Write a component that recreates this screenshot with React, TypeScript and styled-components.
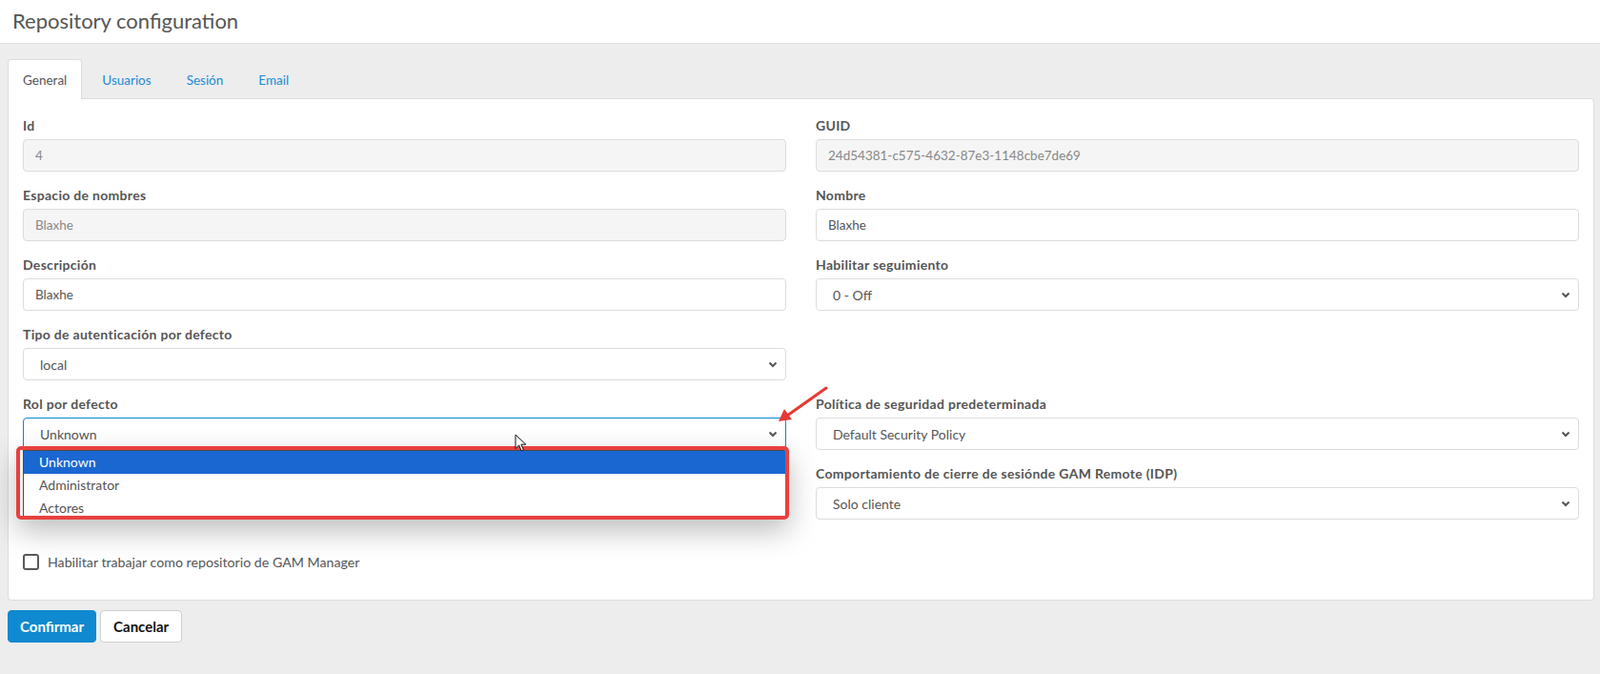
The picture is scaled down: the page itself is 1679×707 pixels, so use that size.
import { createGlobalStyle } from "styled-components";
import styled from "styled-components";

const GlobalStyle = createGlobalStyle`
  html, body {
    margin: 0;
    padding: 0;
    background: #ededed;
    font-family: Lato, "Open Sans", "Liberation Sans", sans-serif;
    color: #555;
  }
  * {
    box-sizing: border-box;
  }
`;

type FieldDef = {
  label: string;
  value: string;
  kind: "input" | "select" | "empty";
  disabled?: boolean;
};

const fields: FieldDef[] = [
  { label: "Id", value: "4", kind: "input", disabled: true },
  { label: "GUID", value: "24d54381-c575-4632-87e3-1148cbe7de69", kind: "input", disabled: true },
  { label: "Espacio de nombres", value: "Blaxhe", kind: "input", disabled: true },
  { label: "Nombre", value: "Blaxhe", kind: "input" },
  { label: "Descripción", value: "Blaxhe", kind: "input" },
  { label: "Habilitar seguimiento", value: "0 - Off", kind: "select" },
  { label: "Tipo de autenticación por defecto", value: "local", kind: "select" },
  { label: "", value: "", kind: "empty" }
];

const fieldsAfter: FieldDef[] = [
  { label: "Política de seguridad predeterminada", value: "Default Security Policy", kind: "select" },
  { label: "", value: "", kind: "empty" },
  { label: "Comportamiento de cierre de sesiónde GAM Remote (IDP)", value: "Solo cliente", kind: "select" }
];

const roleOptions = ["Unknown", "Administrator", "Actores"];

const HeaderBar = styled.header`
  height: 46px;
  background: #fff;
  border-bottom: 1px solid #dcdcdc;
  display: flex;
  align-items: center;
  padding-left: 13px;
`;

const Title = styled.h1`
  margin: 0;
  font-size: 22px;
  font-weight: 400;
  color: #555;
  line-height: 1;
  padding-bottom: 2px;
`;

const Main = styled.main`
  padding: 16px 6px 0 8px;
`;

const TabList = styled.nav`
  display: flex;
  gap: 5px;
  position: relative;
  z-index: 1;
  margin-bottom: -1px;
`;

const Tab = styled.a<{ $active?: boolean }>`
  display: flex;
  align-items: center;
  height: 42px;
  padding: 0 15px;
  font-size: 13.5px;
  text-decoration: none;
  color: ${(p) => (p.$active ? "#555" : "#1b8bd3")};
  background: ${(p) => (p.$active ? "#fff" : "transparent")};
  border: 1px solid ${(p) => (p.$active ? "#dcdcdc" : "transparent")};
  border-bottom: none;
  border-radius: 4px 4px 0 0;
`;

const Panel = styled.section`
  background: #fff;
  border: 1px solid #dcdcdc;
  border-radius: 0 4px 4px 4px;
  padding: 18px 15px 30px;
`;

const FormGrid = styled.div`
  display: grid;
  grid-template-columns: 1fr 1fr;
  column-gap: 31px;
`;

const Field = styled.div`
  margin-bottom: 15px;
  min-height: 58px;
`;

const Label = styled.label`
  display: block;
  font-size: 14px;
  font-weight: 700;
  letter-spacing: 0.3px;
  line-height: 19px;
  margin-bottom: 5px;
  color: #555;
`;

const TextInput = styled.input`
  display: block;
  width: 100%;
  height: 34px;
  padding: 0 12px;
  font-family: inherit;
  font-size: 13.5px;
  color: ${(p) => (p.disabled ? "#888" : "#555")};
  background: ${(p) => (p.disabled ? "#f5f5f5" : "#fff")};
  border: 1px solid #dcdcdc;
  border-radius: 4px;
  outline: none;
`;

const SelectWrap = styled.div`
  position: relative;
`;

const SelectBox = styled.div<{ $focused?: boolean }>`
  display: flex;
  align-items: center;
  justify-content: space-between;
  height: 34px;
  padding: 0 8px 0 17px;
  font-size: 14px;
  color: #555;
  background: #fff;
  border: 1px solid ${(p) => (p.$focused ? "#0c86d1" : "#dcdcdc")};
  border-radius: 4px;
`;

const Chevron = styled.svg`
  width: 10px;
  height: 7px;
  flex: none;
`;

const DropFrame = styled.div`
  position: absolute;
  top: 30px;
  left: -7px;
  right: -3px;
  height: 77px;
  border: 4px solid #e8403f;
  border-radius: 5px;
  padding-left: 3px;
  background: #f2f2f2;
  box-shadow: 0 12px 30px rgba(0, 0, 0, 0.26);
  z-index: 5;
  overflow: hidden;
`;

const OptionList = styled.ul`
  list-style: none;
  margin: 0;
  padding: 0;
  height: 100%;
  background: #fff;
  border: 1px solid #4a4a4a;
  border-right: none;
  border-bottom: none;
  overflow: hidden;
`;

const OptionItem = styled.li<{ $selected?: boolean }>`
  height: 24px;
  line-height: 24px;
  padding-left: 16px;
  font-size: 14px;
  color: ${(p) => (p.$selected ? "#fff" : "#555")};
  background: ${(p) => (p.$selected ? "#1a67d2" : "#fff")};
`;

const Pointer = styled.svg`
  position: absolute;
  left: 516px;
  top: 17px;
  width: 14px;
  height: 20px;
  z-index: 6;
`;

const Annotation = styled.svg`
  position: absolute;
  left: 785px;
  top: -40px;
  width: 70px;
  height: 56px;
  z-index: 6;
  overflow: visible;
`;

const CheckRow = styled.label`
  display: flex;
  align-items: center;
  gap: 9px;
  margin-top: 19px;
  height: 20px;
  font-size: 14.2px;
  color: #555;
`;

const CheckBox = styled.span`
  width: 17px;
  height: 17px;
  border: 2px solid #5a5a5a;
  border-radius: 3px;
  background: #fff;
  flex: none;
`;

const Actions = styled.div`
  display: flex;
  gap: 4px;
  margin-top: 10px;
`;

const Button = styled.button<{ $primary?: boolean }>`
  height: 34px;
  padding: 0 ${(p) => (p.$primary ? 12 : 13)}px;
  font-family: inherit;
  font-size: 15px;
  font-weight: 700;
  border-radius: 4px;
  color: ${(p) => (p.$primary ? "#fff" : "#111")};
  background: ${(p) => (p.$primary ? "#0f89cf" : "#fff")};
  border: 1px solid ${(p) => (p.$primary ? "#0f89cf" : "#cfcfcf")};
`;

function ChevronIcon() {
  return (
    <Chevron viewBox="0 0 10 7">
      <path d="M1.5 1.5 L5 5 L8.5 1.5" fill="none" stroke="#555" strokeWidth="2" />
    </Chevron>
  );
}

function FormField({ def }: { def: FieldDef }) {
  if (def.kind === "empty") {
    return <Field />;
  }
  return (
    <Field>
      <Label>{def.label}</Label>
      {def.kind === "input" ? (
        <TextInput value={def.value} disabled={def.disabled} readOnly />
      ) : (
        <SelectBox>
          <span>{def.value}</span>
          <ChevronIcon />
        </SelectBox>
      )}
    </Field>
  );
}

function RoleField() {
  return (
    <Field>
      <Label>Rol por defecto</Label>
      <SelectWrap>
        <SelectBox $focused>
          <span>Unknown</span>
          <ChevronIcon />
        </SelectBox>
        <Pointer viewBox="0 0 14 20">
          <path d="M1 1 L1 15.5 L4.6 12 L7.2 18 L9.4 17 L6.9 11.2 L11.8 11.2 Z" fill="#fff" stroke="#111" strokeWidth="1" />
        </Pointer>
        <Annotation viewBox="0 0 70 56">
          <line x1="58" y1="9" x2="17" y2="38" stroke="#e53935" strokeWidth="3" strokeLinecap="round" />
          <polygon points="8,44 22,42 14,31" fill="#e53935" />
        </Annotation>
        <DropFrame>
          <OptionList>
            {roleOptions.map((opt, i) => (
              <OptionItem key={opt} $selected={i === 0}>
                {opt}
              </OptionItem>
            ))}
          </OptionList>
        </DropFrame>
      </SelectWrap>
    </Field>
  );
}

export default function App() {
  return (
    <>
      <GlobalStyle />
      <HeaderBar>
        <Title>Repository configuration</Title>
      </HeaderBar>
      <Main>
        <TabList>
          <Tab $active>General</Tab>
          <Tab>Usuarios</Tab>
          <Tab>Sesión</Tab>
          <Tab>Email</Tab>
        </TabList>
        <Panel>
          <FormGrid>
            {fields.map((f, i) => (
              <FormField key={i} def={f} />
            ))}
            <RoleField />
            {fieldsAfter.map((f, i) => (
              <FormField key={"a" + i} def={f} />
            ))}
          </FormGrid>
          <CheckRow>
            <CheckBox />
            Habilitar trabajar como repositorio de GAM Manager
          </CheckRow>
        </Panel>
        <Actions>
          <Button $primary>Confirmar</Button>
          <Button>Cancelar</Button>
        </Actions>
      </Main>
    </>
  );
}
